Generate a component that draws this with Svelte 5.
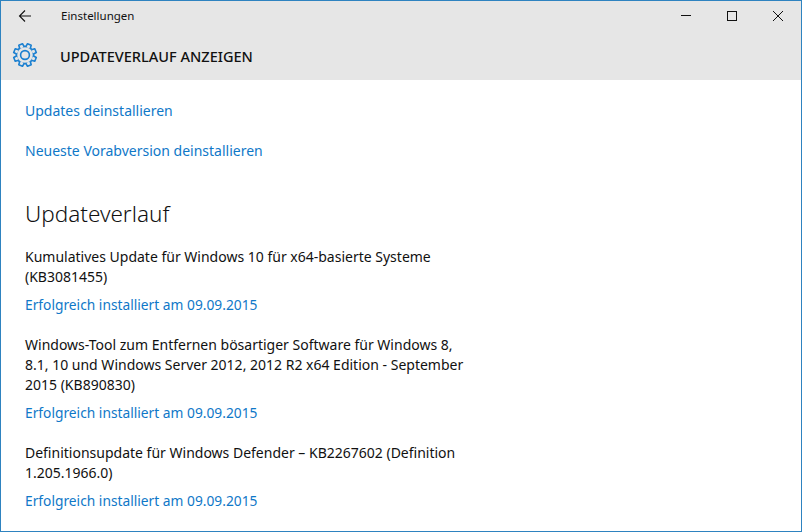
<script>
  const updates = [
    { lines: ['Kumulatives Update für Windows 10 für x64-basierte Systeme', '(KB3081455)'], status: 'Erfolgreich installiert am 09.09.2015' },
    { lines: ['Windows-Tool zum Entfernen bösartiger Software für Windows 8,', '8.1, 10 und Windows Server 2012, 2012 R2 x64 Edition - September', '2015 (KB890830)'], status: 'Erfolgreich installiert am 09.09.2015' },
    { lines: ['Definitionsupdate für Windows Defender – KB2267602 (Definition', '1.205.1966.0)'], status: 'Erfolgreich installiert am 09.09.2015' }
  ]

  // eight rounded teeth around the hub
  const teeth = [0, 45, 90, 135, 180, 225, 270, 315]
</script>

<div class="window">
  <header>
    <div class="titlebar">
      <svg class="back" width="16" height="16" viewBox="0 0 16 16" aria-hidden="true">
        <path d="M14 8H2.5M8 2.5 2.5 8 8 13.5" fill="none" stroke="#111" stroke-width="1.1"></path>
      </svg>
      <span class="app-name">Einstellungen</span>
      <div class="controls">
        <svg width="12" height="12" viewBox="0 0 12 12" aria-hidden="true"><path d="M1 5.5h10" stroke="#111" fill="none"></path></svg>
        <svg width="12" height="12" viewBox="0 0 12 12" aria-hidden="true"><rect x="1.5" y="1.5" width="9" height="9" stroke="#111" fill="none"></rect></svg>
        <svg width="12" height="12" viewBox="0 0 12 12" aria-hidden="true"><path d="M1 1l10 10M11 1 1 11" stroke="#111" fill="none"></path></svg>
      </div>
    </div>
    <div class="pagebar">
      <svg width="26" height="26" viewBox="0 0 26 26" aria-hidden="true">
        <circle cx="13" cy="13" r="4.4" fill="none" stroke="#1a7fd0" stroke-width="1.6"></circle>
        <circle cx="13" cy="13" r="8.6" fill="none" stroke="#1a7fd0" stroke-width="1.6"></circle>
        {#each teeth as angle}
          <path transform="rotate({angle + 22.5} 13 13)" d="M10.6 5.2 11 1.6h4l.4 3.6" fill="#e6e6e6" stroke="#1a7fd0" stroke-width="1.6" stroke-linejoin="round"></path>
        {/each}
      </svg>
      <h1>UPDATEVERLAUF ANZEIGEN</h1>
    </div>
  </header>

  <main>
    <a class="link first" href="#top">Updates deinstallieren</a>
    <a class="link second" href="#top">Neueste Vorabversion deinstallieren</a>

    <h2>Updateverlauf</h2>

    {#each updates as update}
      <section>
        <p>
          {#each update.lines as line}
            <span>{line}</span>
          {/each}
        </p>
        <a class="link status" href="#top">{update.status}</a>
      </section>
    {/each}
  </main>
</div>

<style>
  :global(body) {
    margin: 0;
    background: #fff;
  }

  .window {
    box-sizing: border-box;
    width: 802px;
    height: 532px;
    overflow: hidden;
    border: 1px solid #2e83c0;
    font-family: "Noto Sans", "Open Sans", sans-serif;
    color: #111;
  }

  header {
    height: 79px;
    background: #e6e6e6;
  }

  .titlebar {
    display: flex;
    align-items: center;
    height: 29px;
  }

  .back {
    margin-left: 16px;
  }

  .app-name {
    margin-left: 28px;
    font-size: 11.5px;
  }

  .controls {
    display: flex;
    gap: 34px;
    margin-left: auto;
    margin-right: 17px;
  }

  .pagebar {
    display: flex;
    align-items: center;
    height: 50px;
    padding-left: 11px;
  }

  h1 {
    margin: 0 0 0 22px;
    padding-top: 2px;
    font-size: 14.55px;
    font-weight: 500;
  }

  main {
    padding: 21px 24px 0;
  }

  .link {
    display: block;
    color: #0f78c8;
    font-size: 14px;
    line-height: 20px;
    text-decoration: none;
  }

  .second {
    margin-top: 20px;
  }

  h2 {
    margin: 37px 0 0;
    font-size: 22.5px;
    font-weight: 300;
    line-height: 32px;
  }

  section {
    margin-top: 17px;
  }

  section + section {
    margin-top: 20px;
  }

  section .status {
    margin-top: 8px;
    font-size: 13.77px;
  }

  p {
    margin: 0;
    font-size: 14px;
    line-height: 20px;
  }

  p span {
    display: block;
    white-space: nowrap;
  }
</style>
